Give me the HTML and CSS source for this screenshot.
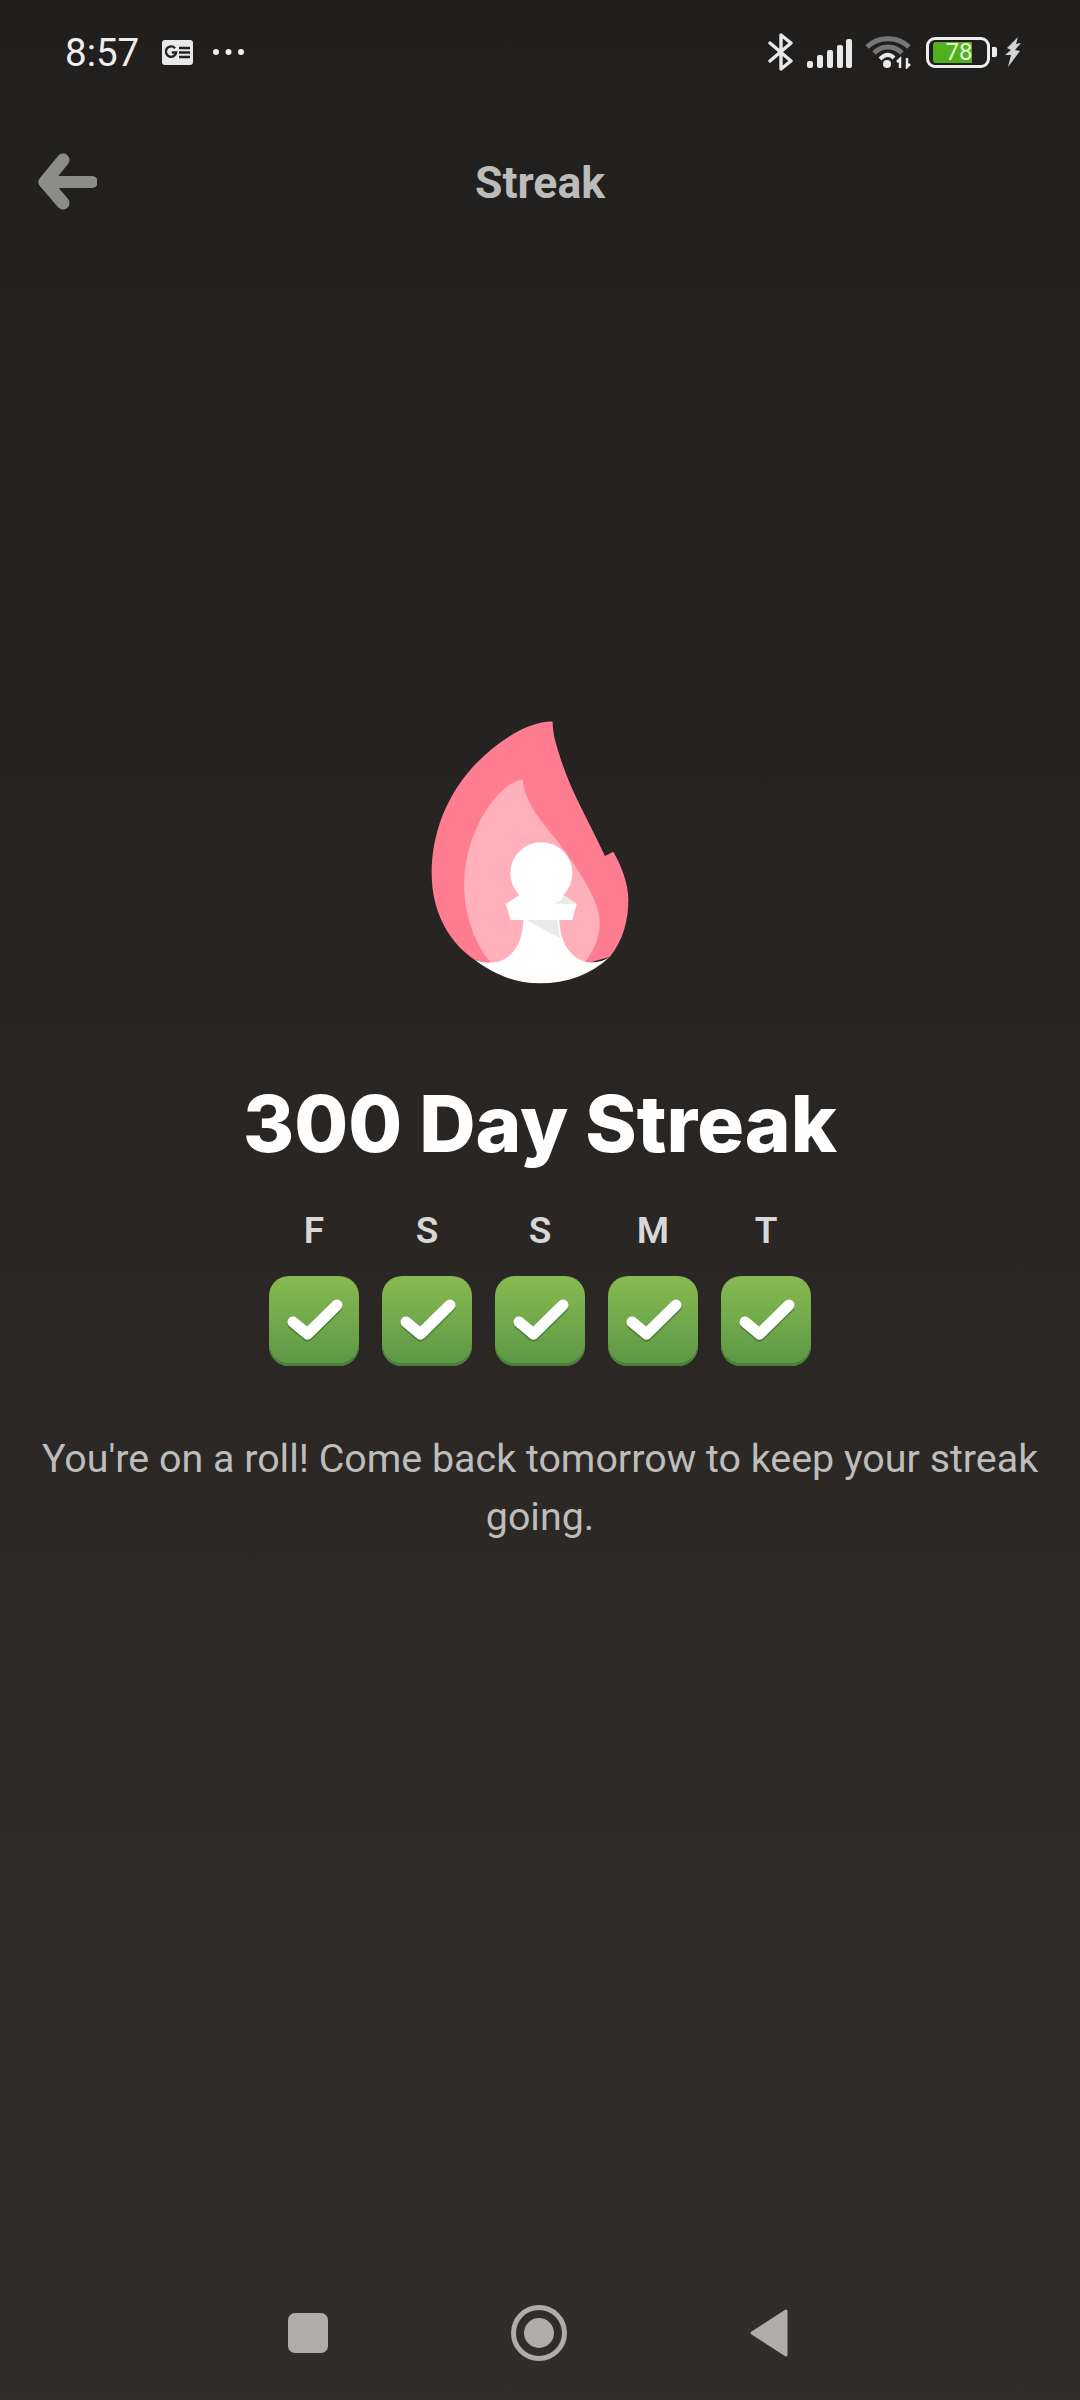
FILE: index.html
```html
<!DOCTYPE html>
<html lang="en">
<head>
    <meta charset="UTF-8">
    <meta name="viewport" content="width=device-width, initial-scale=1.0">
    <title>Streak</title>
    <link rel="stylesheet" href="styles.css">
</head>
<body>
    <div id="statusbar">
        <div class="status-left">
            <span class="time">8:57</span>
            <svg class="news-icon" width="31" height="25" viewBox="0 0 31 25">
                <rect width="31" height="25" rx="3" fill="#e8e8e8"/>
                <path d="M13 8.2a5.2 5.2 0 1 0 1.2 4.3h-4.4" fill="none" stroke="#222" stroke-width="2.4"/>
                <path d="M17 8h11M17 12.5h11M17 17h11" stroke="#222" stroke-width="2.4"/>
            </svg>
            <svg class="dots-icon" width="31" height="8" viewBox="0 0 31 8">
                <circle cx="3" cy="4" r="3" fill="#eee"/>
                <circle cx="15.500" cy="4" r="3" fill="#eee"/>
                <circle cx="28" cy="4" r="3" fill="#eee"/>
            </svg>
        </div>
        <div class="status-right">
            <svg width="25" height="38" viewBox="0 0 25 38">
                <path d="M2 10l21 18-10 8V2l10 8L2 28" fill="none" stroke="#e8e8e8" stroke-width="3.400" stroke-linejoin="round" stroke-linecap="round"/>
            </svg>
            <svg class="signal-icon" width="45" height="29" viewBox="0 0 45 29">
                <rect x="0" y="22" width="6" height="7" rx="2" fill="#e8e8e8"/>
                <rect x="10" y="16" width="6" height="13" rx="2" fill="#e8e8e8"/>
                <rect x="20" y="11" width="6" height="18" rx="2" fill="#e8e8e8"/>
                <rect x="30" y="6" width="6" height="23" rx="2" fill="#e8e8e8"/>
                <rect x="39" y="0" width="6" height="29" rx="2" fill="#e8e8e8"/>
            </svg>
            <svg class="wifi-icon" width="46" height="34" viewBox="0 0 46 34">
                <path d="M2 12C13 1 33 1 44 12" fill="none" stroke="#777" stroke-width="5"/>
                <path d="M9 18C17 10 29 10 37 18" fill="none" stroke="#777" stroke-width="5"/>
                <path d="M15 24C20 19 25 19 29 23" fill="none" stroke="#e8e8e8" stroke-width="4"/>
                <circle cx="22" cy="29" r="4" fill="#e8e8e8"/>
                <path d="M35 33v-9l-3 3M42 23v9l3-3" fill="none" stroke="#e8e8e8" stroke-width="2.500"/>
            </svg>
            <div class="battery">
                <div class="battery-body">
                    <div class="battery-fill"></div>
                    <span class="battery-level">78</span>
                </div>
                <div class="battery-tip"></div>
            </div>
            <svg class="bolt-icon" width="17" height="30" viewBox="0 0 17 30">
                <path d="M13 0L2 11l4 2-6 5h6l-3 12 12-16-5-1 6-7-5 1z" fill="#d4d4d4"/>
            </svg>
        </div>
    </div>

    <div id="header">
        <svg class="back-icon" width="60" height="60" viewBox="0 0 60 60">
            <path d="M26 7L8 29l18 21" fill="none" stroke="#8c8c8a" stroke-width="13" stroke-linecap="round" stroke-linejoin="round"/>
            <path d="M10 29h45" fill="none" stroke="#8c8c8a" stroke-width="12" stroke-linecap="round"/>
        </svg>
        <h1>Streak</h1>
    </div>

    <div id="main">
        <svg class="flame" width="240" height="300" viewBox="60 0 720 900">
            <path fill="#ff7d90" d="M458 65C400 62 300 110 215 205C140 290 95 400 95 520C95 640 150 730 225 780L420 830L630 770C670 720 685 660 685 600C685 550 665 500 640 455L615 468C570 370 510 270 480 170C465 125 458 95 458 65Z"/>
            <path fill="#ffb0ba" d="M368 238C300 250 245 340 215 420C195 480 188 540 195 600C205 680 240 760 285 800L545 800C585 750 605 700 598 650C590 590 530 500 470 420C425 365 375 310 368 238Z"/>
            <path fill="#fff" d="M225 780C250 788 275 790 295 785C345 770 368 720 370 660L332 660L317 612L358 585A93 93 0 1 1 490 585L530 612L517 660L478 660C480 720 505 770 555 785C580 790 610 785 630 770C570 825 500 850 420 850C340 850 280 820 225 780Z"/>
            <path fill="#eaeaea" d="M380 660L472 660L480 715ZM450 610C475 610 490 600 490 585L530 612L505 612Z"/>
        </svg>

        <h2>300 Day Streak</h2>

        <div class="days">
            <div class="day">
                <span>F</span>
                <div class="check-box"><svg width="90" height="90" viewBox="0 0 90 90"><path class="tick-shadow" d="M24 48l14.500 12L68 31"/><path class="tick" d="M24 46l14.500 12L68 29"/></svg></div>
            </div>
            <div class="day">
                <span>S</span>
                <div class="check-box"><svg width="90" height="90" viewBox="0 0 90 90"><path class="tick-shadow" d="M24 48l14.500 12L68 31"/><path class="tick" d="M24 46l14.500 12L68 29"/></svg></div>
            </div>
            <div class="day">
                <span>S</span>
                <div class="check-box"><svg width="90" height="90" viewBox="0 0 90 90"><path class="tick-shadow" d="M24 48l14.500 12L68 31"/><path class="tick" d="M24 46l14.500 12L68 29"/></svg></div>
            </div>
            <div class="day">
                <span>M</span>
                <div class="check-box"><svg width="90" height="90" viewBox="0 0 90 90"><path class="tick-shadow" d="M24 48l14.500 12L68 31"/><path class="tick" d="M24 46l14.500 12L68 29"/></svg></div>
            </div>
            <div class="day">
                <span>T</span>
                <div class="check-box"><svg width="90" height="90" viewBox="0 0 90 90"><path class="tick-shadow" d="M24 48l14.500 12L68 31"/><path class="tick" d="M24 46l14.500 12L68 29"/></svg></div>
            </div>
        </div>

        <p class="message">You're on a roll! Come back tomorrow to keep your streak going.</p>
    </div>

    <div id="navbar">
        <div class="nav-square"></div>
        <div class="nav-circle"><div class="nav-dot"></div></div>
        <svg width="38" height="48" viewBox="0 0 38 48">
            <path d="M36 2L2 24l34 22z" fill="#aeadab" stroke="#aeadab" stroke-width="3" stroke-linejoin="round"/>
        </svg>
    </div>
</body>
</html>
```

FILE: styles.css
```css
* {
    box-sizing: border-box;
}

body {
    font-family: 'Roboto', sans-serif;
    background: linear-gradient(to bottom, #211f1e, #312d2a);
    color: #bbb;
    margin: 0;
    width: 1080px;
    height: 2400px;
    display: flex;
    flex-direction: column;
}

#statusbar {
    height: 104px;
    padding: 0 58px 0 65px;
    display: flex;
    align-items: center;
    justify-content: space-between;
}

.status-left {
    display: flex;
    align-items: center;
}

.time {
    font-size: 38.500px;
    color: #eee;
    width: 97px;
}

.dots-icon {
    margin-left: 20px;
}

.status-right {
    display: flex;
    align-items: center;
    gap: 14px;
}

.signal-icon {
    margin-top: 2px;
}

.wifi-icon {
    margin-left: -1px;
}

.bolt-icon {
    margin-left: -6px;
}

.battery {
    display: flex;
    align-items: center;
    gap: 2px;
    margin-left: 1px;
}

.battery-body {
    position: relative;
    width: 64px;
    height: 31px;
    border: 3px solid #eee;
    border-radius: 9px;
}

.battery-fill {
    position: absolute;
    left: 4px;
    top: 2px;
    width: 39px;
    height: 21px;
    background: #52b01f;
    border-radius: 3px 0 0 3px;
}

.battery-level {
    position: absolute;
    left: 13px;
    top: 0;
    width: 34px;
    font-size: 24px;
    line-height: 25px;
    color: #e4f5d8;
    text-align: center;
}

.battery-tip {
    width: 5px;
    height: 10px;
    background: #eee;
    border-radius: 0 2px 2px 0;
}

#header {
    height: 158px;
    padding-left: 37px;
    display: grid;
    grid-template-columns: 1fr auto 1fr;
    align-items: center;
}

.back-icon {
    grid-column: 1;
}

h1 {
    grid-column: 2;
    margin: 0 37px 0 0;
    font-size: 44.500px;
    font-weight: 700;
    color: #bcbcba;
}

#main {
    display: flex;
    flex-direction: column;
    align-items: center;
    padding-top: 438px;
}

.flame {
    display: block;
}

h2 {
    font-family: 'Inter', sans-serif;
    font-size: 78px;
    font-weight: 800;
    line-height: 92px;
    color: #fff;
    margin: 78px 0 0;
}

.days {
    display: flex;
    gap: 23px;
    margin-top: 39px;
}

.day {
    width: 90px;
    display: flex;
    flex-direction: column;
    align-items: center;
    gap: 23px;
}

.day span {
    font-size: 37px;
    font-weight: 600;
    line-height: 44px;
    color: #d8d8d8;
}

.check-box {
    width: 90px;
    height: 90px;
    border-radius: 20px;
    background: linear-gradient(to bottom, #87ba50, #5c9746);
    box-shadow: inset 0 -3px 0 #4b8039;
}

.check-box svg {
    display: block;
}

.tick, .tick-shadow {
    fill: none;
    stroke-width: 11px;
    stroke-linecap: round;
    stroke-linejoin: round;
}

.tick {
    stroke: #fff;
}

.tick-shadow {
    stroke: #4b8039;
}

.message {
    width: 1040px;
    margin: 64px 0 0;
    font-size: 39.400px;
    line-height: 58px;
    text-align: center;
    color: #bdbdbb;
}

#navbar {
    margin-top: auto;
    padding: 0 4px 39px 0;
    display: flex;
    align-items: center;
    justify-content: center;
    gap: 183px;
}

.nav-square {
    width: 40px;
    height: 40px;
    background: #aeadab;
    border-radius: 7px;
}

.nav-circle {
    width: 56px;
    height: 56px;
    border: 5px solid #aeadab;
    border-radius: 50%;
    display: flex;
    align-items: center;
    justify-content: center;
}

.nav-dot {
    width: 30px;
    height: 30px;
    background: #aeadab;
    border-radius: 50%;
}
```
